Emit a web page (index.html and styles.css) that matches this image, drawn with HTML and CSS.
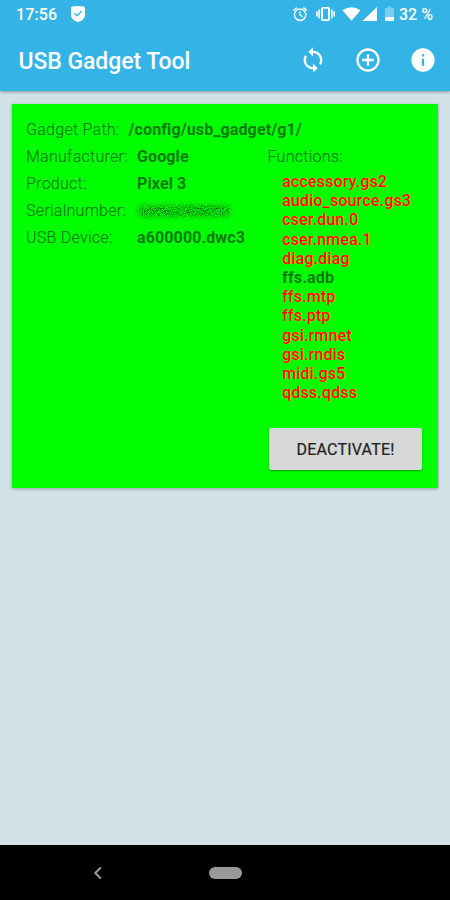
FILE: index.html
```html
<!DOCTYPE html>
<html lang="en">
<head>
<meta charset="utf-8">
<title>USB Gadget Tool</title>
<link rel="stylesheet" href="styles.css">
</head>
<body>
<div class="screen">
  <header class="top">
    <div class="status">
      <span class="clock">17:56</span>
      <svg class="shield" width="14" height="16" viewBox="0 0 14 16"><path fill="#fff" d="M7 0 L12.5 .5 Q14 .7 14 2 V8.5 C14 12.5 11 15 7 16 C3 15 0 12.5 0 8.5 V2 Q0 .7 1.500 .5Z"/><path d="M3.500 7.200 L6 9.700 L10.500 5.200" fill="none" stroke="#34b4e6" stroke-width="1.500"/></svg>
      <svg class="status-icons" width="104" height="18" viewBox="0 0 104 18" fill="none" stroke="#fff">
        <circle cx="8.100" cy="9.700" r="5.700" stroke-width="1.500"/><path d="M8 6.300V10l2.800 1.700" stroke-width="1.200"/><path d="M1.400 5.500 4.800 2.600M11.400 2.600 14.800 5.500" stroke-width="1.500"/>
        <g stroke-width="1.700"><rect x="30" y="2.900" width="7" height="12.200" rx=".8" stroke-width="1.900"/><path d="M27.200 4.500V13.500M24.900 6.500V11.500M39.800 4.500V13.500M42.100 6.500V11.500"/></g>
        <path fill="#fff" stroke="none" d="M50.500 5.300Q59.500-1 68.500 5.300L59.500 15.800ZM85 2V16H70.500Z"/>
        <path fill="#fff" fill-opacity=".35" stroke="none" d="M95.500 1.500H99.500V3H102V12H93V3H95.500Z"/><path fill="#fff" stroke="none" d="M93 12H102V15.200Q102 16 101 16H94Q93 16 93 15.200Z"/>
      </svg>
      <span class="battery">32 %</span>
    </div>
    <div class="toolbar">
      <h1>USB Gadget Tool</h1>
      <svg class="icon" viewBox="0 0 24 24"><path d="M12 4V1L8 5l4 4V6c3.310 0 6 2.690 6 6 0 1.010-.25 1.970-.7 2.800l1.460 1.460C19.540 15.030 20 13.570 20 12c0-4.420-3.580-8-8-8zm0 14c-3.310 0-6-2.690-6-6 0-1.010.25-1.970.7-2.800L5.240 7.740C4.460 8.970 4 10.430 4 12c0 4.420 3.580 8 8 8v3l4-4-4-4v3z"/></svg>
      <svg class="icon" viewBox="0 0 24 24"><path d="M13 7h-2v4H7v2h4v4h2v-4h4v-2h-4V7zm-1-5C6.480 2 2 6.480 2 12s4.480 10 10 10 10-4.480 10-10S17.520 2 12 2zm0 18c-4.410 0-8-3.590-8-8s3.590-8 8-8 8 3.590 8 8-3.590 8-8 8z"/></svg>
      <svg class="icon" viewBox="0 0 24 24"><path d="M12 2C6.480 2 2 6.480 2 12s4.480 10 10 10 10-4.480 10-10S17.520 2 12 2zm1 15h-2v-6h2v6zm0-8h-2V7h2v2z"/></svg>
    </div>
  </header>
  <main>
    <section class="card">
      <div class="path"><span class="label">Gadget Path:</span><b>/config/usb_gadget/g1/</b></div>
      <div class="columns">
        <div class="details">
          <span class="label">Manufacturer:</span><b>Google</b>
          <span class="label">Product:</span><b>Pixel 3</b>
          <span class="label">Serialnumber:</span>
          <svg class="serial" width="106" height="27" viewBox="0 0 106 27">
            <defs>
              <filter id="grain" x="0" y="0" width="100%" height="100%" color-interpolation-filters="sRGB"><feTurbulence type="fractalNoise" baseFrequency="0.95" numOctaves="3" seed="7"/><feColorMatrix values="0 0 0 0 0  0 0 0 0 .4  0 0 0 0 0  2.800 0 0 0 -1"/></filter>
              <filter id="soft" x="-10%" y="-60%" width="120%" height="220%"><feGaussianBlur stdDeviation="2.500"/></filter>
              <mask id="edge"><rect x="4" y="8" width="92" height="12" rx="4" fill="#fff" filter="url(#soft)"/></mask>
            </defs>
            <g mask="url(#edge)"><rect width="106" height="27" filter="url(#grain)"/></g>
          </svg>
          <span class="label">USB Device:</span><b>a600000.dwc3</b>
        </div>
        <div class="functions">
          <span class="label">Functions:</span>
          <ul>
            <li>accessory.gs2</li><li>audio_source.gs3</li><li>cser.dun.0</li><li>cser.nmea.1</li><li>diag.diag</li><li class="active">ffs.adb</li><li>ffs.mtp</li><li>ffs.ptp</li><li>gsi.rmnet</li><li>gsi.rndis</li><li>midi.gs5</li><li>qdss.qdss</li>
          </ul>
        </div>
      </div>
      <button type="button">DEACTIVATE!</button>
    </section>
  </main>
  <nav>
    <svg class="back" width="10" height="14" viewBox="0 0 10 14"><path d="M7.800 1.500 2.300 7l5.500 5.500" fill="none" stroke="#999" stroke-width="2"/></svg>
    <span class="home"></span>
  </nav>
</div>
</body>
</html>
```
FILE: styles.css
```css
* { box-sizing: border-box; }
body { margin: 0; font-family: Roboto, sans-serif; }
.screen { width: 450px; height: 900px; display: flex; flex-direction: column; background: #d1e1e8; overflow: hidden; }
.top { height: 91px; flex: none; background: #34b4e6; color: #fff; box-shadow: 0 1px 3px rgba(0,0,0,.35); }
.status { height: 29px; display: flex; align-items: center; padding: 0 16px; font-size: 16px; font-weight: 500; }
.clock { width: 55px; letter-spacing: .1px; }
.shield { margin-top: -2px; }
.status-icons { margin: -2px 0 0 207px; }
.battery { margin-left: 3px; white-space: nowrap; }
.toolbar { height: 62px; display: flex; align-items: center; padding-left: 18.500px; }
h1 { margin: 3px 0 0; width: 280px; flex: none; font-size: 23px; line-height: 28px; font-weight: 500; letter-spacing: -.07px; white-space: nowrap; }
.icon { width: 28px; height: 28px; margin-right: 27px; flex: none; fill: #fff; }
main { flex: 1; padding: 13px 12px 0; }
.card { height: 384px; padding: 12px 16px 18px 14px; display: flex; flex-direction: column; background: #0f0; color: #007c00; font-size: 16px; line-height: 27px; letter-spacing: .2px; box-shadow: 0 1px 3px rgba(0,0,0,.3); white-space: nowrap; }
.label { font-weight: 300; letter-spacing: .27px; -webkit-text-stroke: .15px #007c00; }
b { font-weight: 700; letter-spacing: .12px; }
.path { display: flex; gap: 9px; }
.columns { display: grid; grid-template-columns: 241.5px 1fr; flex: 1; }
.details { display: grid; grid-template-columns: 111px 1fr; grid-auto-rows: 27px; }
.serial { margin-left: -3px; }
ul { list-style: none; margin: 2px 0 0 14.500px; padding: 0; line-height: 19.200px; font-weight: 500; color: #f00; letter-spacing: .17px; text-shadow: 0 0 1px #ff0; }
.active { color: #007c00; font-weight: 700; text-shadow: none; }
button { align-self: flex-end; width: 153px; height: 42px; padding: 0; border: 0; border-radius: 2px; background: #d6d7d7; color: #212121; font: 400 16px Roboto, sans-serif; letter-spacing: .2px; -webkit-text-stroke: .2px #212121; box-shadow: 0 1px 2px rgba(0,0,0,.4); }
nav { height: 55px; flex: none; display: flex; align-items: center; padding-left: 93px; background: #000; }
.back { margin-right: 106px; }
.home { width: 33px; height: 12px; border-radius: 6px; background: #999; }
```
